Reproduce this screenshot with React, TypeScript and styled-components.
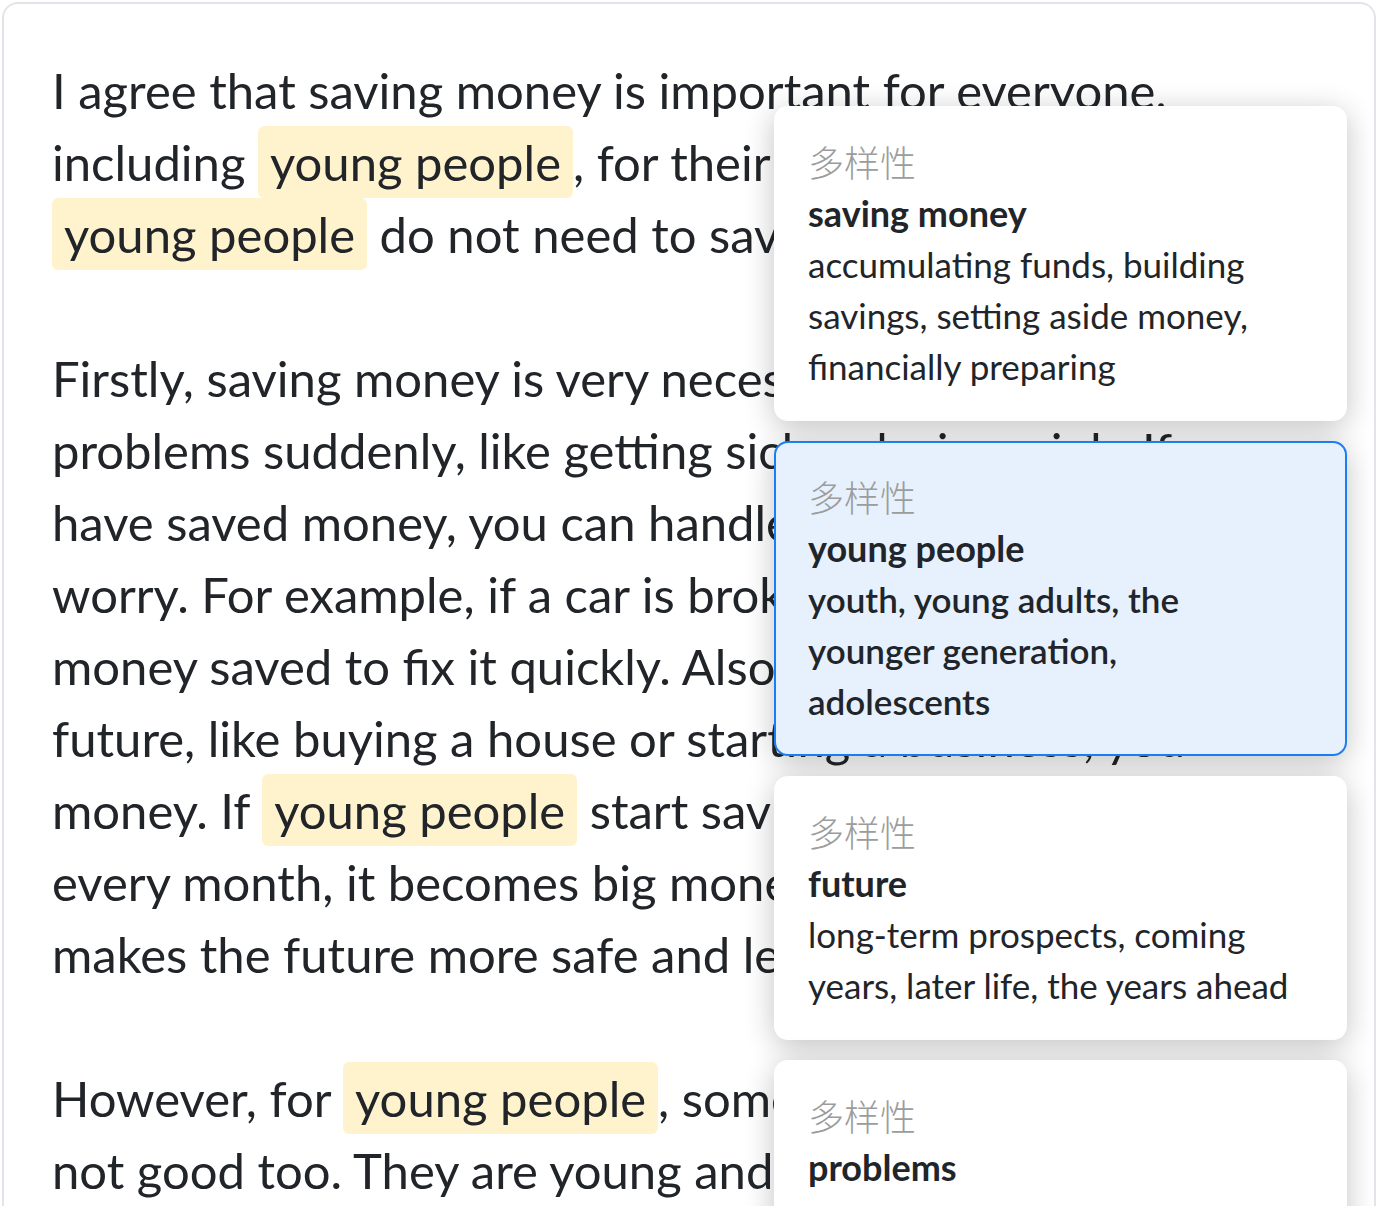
import React from 'react'
import styled, { createGlobalStyle } from 'styled-components'

const GlobalStyle = createGlobalStyle`
    html, body {
        margin: 0;
        padding: 0;
        background: #ffffff;
        overflow: hidden;
    }
    body {
        font-family: Lato, "Noto Sans", "Noto Sans CJK SC", sans-serif;
        color: #212529;
    }
`

const Page = styled.div`
    position: relative;
    box-sizing: border-box;
    margin: 2px 2px 0;
    height: 1204px;
    border: 2px solid #e1e4e8;
    border-bottom: none;
    border-radius: 16px 16px 0 0;
    background: #ffffff;
    overflow: hidden;
`

const Essay = styled.div`
    padding: 50px 48px 0;
`

const Paragraph = styled.p`
    margin: 0 0 72px;
    font-size: 49px;
    line-height: 72px;
    white-space: nowrap;
`

const Line = styled.span`
    display: block;
`

const Mark = styled.span`
    display: inline-block;
    padding: 0 12px;
    border-radius: 6px;
    background: #fff3cd;
`

const Suggestions = styled.div`
    position: absolute;
    top: 102px;
    right: 27px;
    width: 573px;
    display: flex;
    flex-direction: column;
    gap: 20px;
`

const Card = styled.div<{ $active?: boolean }>`
    box-sizing: border-box;
    padding: 27px 50px 27px 32px;
    border: 2px solid ${(p) => (p.$active ? '#1a7ff2' : 'transparent')};
    border-radius: 14px;
    background: ${(p) => (p.$active ? '#e7f1fd' : '#ffffff')};
    box-shadow: 0 6px 30px rgba(0, 0, 0, 0.24);
    font-size: 35px;
    line-height: 51px;
    color: #212529;
`

const Kind = styled.div`
    font-family: "Noto Sans CJK SC", sans-serif;
    font-size: 36px;
    line-height: 52px;
    font-weight: 300;
    color: #9c9c9c;
`

const Term = styled.div`
    font-size: 36px;
    font-weight: 700;
    line-height: 52px;
`

const Alternatives = styled.div<{ $active?: boolean }>`
    font-weight: ${(p) => (p.$active ? 600 : 400)};
`

const yp = <Mark>young people</Mark>

const paragraphs: React.ReactNode[][] = [
    [
        <>I agree that saving money is important for everyone,</>,
        <>including {yp}, for their future. Some think</>,
        <>{yp} do not need to save, but I disagree.</>,
    ],
    [
        <>Firstly, saving money is very necessary because we have</>,
        <>problems suddenly, like getting sick or losing a job. If you</>,
        <>have saved money, you can handle the problem without</>,
        <>worry. For example, if a car is broken, you can use the</>,
        <>money saved to fix it quickly. Also, saving helps for the</>,
        <>future, like buying a house or starting a business, you</>,
        <>money. If {yp} start saving a little money</>,
        <>every month, it becomes big money after years. It</>,
        <>makes the future more safe and less stressful.</>,
    ],
    [
        <>However, for {yp}, sometimes saving is</>,
        <>not good too. They are young and want to enjoy.</>,
    ],
]

const suggestions = [
    {
        term: 'saving money',
        alternatives: 'accumulating funds, building savings, setting aside money, financially preparing',
    },
    {
        term: 'young people',
        alternatives: 'youth, young adults, the younger generation, adolescents',
        active: true,
    },
    {
        term: 'future',
        alternatives: 'long-term prospects, coming years, later life, the years ahead',
    },
    {
        term: 'problems',
        alternatives: 'difficulties, issues, troubles, challenges',
    },
]

const App = () => {
    return (
        <>
            <GlobalStyle />
            <Page>
                <Essay>
                    {paragraphs.map((lines, i) => (
                        <Paragraph key={i}>
                            {lines.map((line, j) => (
                                <Line key={j}>{line}</Line>
                            ))}
                        </Paragraph>
                    ))}
                </Essay>
                <Suggestions>
                    {suggestions.map((s) => (
                        <Card key={s.term} $active={s.active}>
                            <Kind>多样性</Kind>
                            <Term>{s.term}</Term>
                            <Alternatives $active={s.active}>{s.alternatives}</Alternatives>
                        </Card>
                    ))}
                </Suggestions>
            </Page>
        </>
    )
}

export default App
